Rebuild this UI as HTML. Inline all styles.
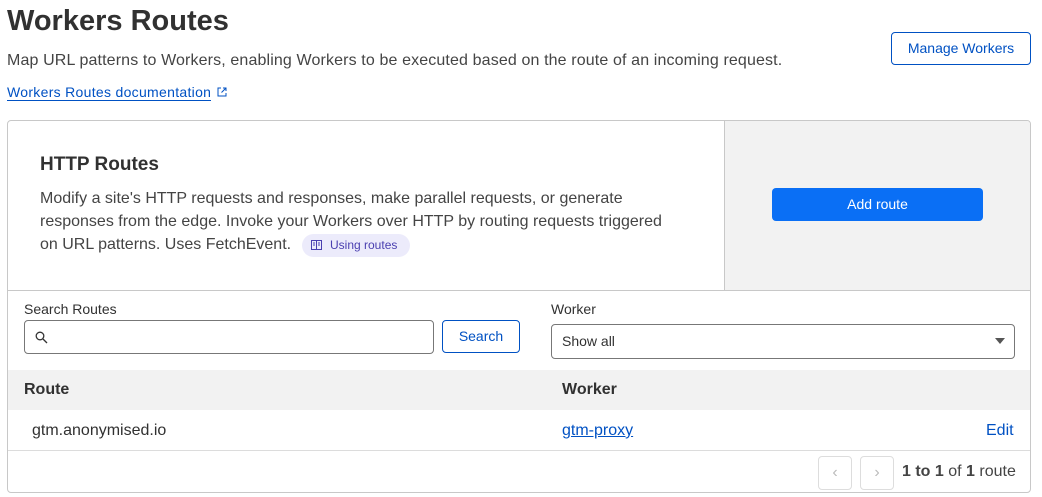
<!DOCTYPE html>
<html><head><style>
*{box-sizing:border-box;margin:0;padding:0}
body{width:1042px;height:497px;background:#fff;font-family:"Liberation Sans",sans-serif;color:#313131;position:relative;overflow:hidden}
.a{position:absolute;white-space:nowrap}
</style></head><body>
<div class="a" style="left:7px;top:5px;font-size:29px;font-weight:bold;color:#313131">Workers Routes</div>
<div class="a" style="left:7px;top:52px;font-size:16px;letter-spacing:0.13px;color:#444">Map URL patterns to Workers, enabling Workers to be executed based on the route of an incoming request.</div>
<div class="a" style="left:7px;top:84px;font-size:14px;letter-spacing:0.3px;color:#0051c3;border-bottom:1px solid #0051c3;line-height:16px">Workers Routes documentation</div>
<svg class="a" style="left:216px;top:86px" width="12" height="12" viewBox="0 0 12 12" fill="none" stroke="#0051c3" stroke-width="1"><path d="M5 2H2v8h8V7M7 2h3v3M10 2L5.5 6.5"/></svg>
<div class="a" style="left:891px;top:32px;width:140px;height:33px;border:1px solid #0051c3;border-radius:4px;color:#0051c3;font-size:14px;text-align:center;line-height:31px">Manage Workers</div>
<div class="a" style="left:7px;top:120px;width:1024px;height:373px;border:1px solid #c8c8c8;border-radius:4px;overflow:hidden">
 <div class="a" style="left:716px;top:0;width:308px;height:170px;background:#f2f2f2;border-left:1px solid #c8c8c8"></div>
 <div class="a" style="left:0;top:169px;width:1024px;height:1px;background:#c8c8c8"></div>
 <div class="a" style="left:32px;top:33px;font-size:19px;font-weight:bold">HTTP Routes</div>
 <div class="a" style="left:32px;top:66px;font-size:16px;line-height:23px;color:#444">Modify a site's HTTP requests and responses, make parallel requests, or generate<br>responses from the edge. Invoke your Workers over HTTP by routing requests triggered<br>on URL patterns. Uses FetchEvent.</div>
 <div class="a" style="left:294px;top:113px;width:108px;height:23px;background:#ecebfb;border-radius:12px;color:#4a3fb0;font-size:12px;line-height:23px;padding-left:28px">Using routes</div>
 <svg class="a" style="left:303px;top:119px" width="11" height="10" viewBox="0 0 11 10" fill="none" stroke="#4a3fb0"><rect x="0.5" y="0.5" width="10" height="9"/><path d="M5.5 1v8M2 3h2M2 5h2M7 3h2M7 5h2"/></svg>
 <div class="a" style="left:764px;top:67px;width:211px;height:33px;background:#0a6ff5;border-radius:4px;color:#fff;font-size:14px;text-align:center;line-height:33px">Add route</div>
 <div class="a" style="left:16px;top:180px;font-size:14px">Search Routes</div>
 <div class="a" style="left:16px;top:199px;width:410px;height:34px;border:1px solid #777;border-radius:4px"></div>
 <svg class="a" style="left:27px;top:210px" width="13" height="13" viewBox="0 0 13 13" fill="none" stroke="#333" stroke-width="1.3"><circle cx="5" cy="5" r="3.8"/><path d="M8 8l4 4"/></svg>
 <div class="a" style="left:434px;top:199px;width:78px;height:33px;border:1px solid #0051c3;border-radius:4px;color:#0051c3;font-size:14px;text-align:center;line-height:31px">Search</div>
 <div class="a" style="left:543px;top:180px;font-size:14px">Worker</div>
 <div class="a" style="left:543px;top:203px;width:464px;height:35px;border:1px solid #777;border-radius:4px;font-size:14px;line-height:33px;padding-left:10px">Show all</div>
 <div class="a" style="left:987px;top:217px;width:0;height:0;border-left:5px solid transparent;border-right:5px solid transparent;border-top:6px solid #555"></div>
 <div class="a" style="left:0;top:249px;width:1024px;height:40px;background:#f2f2f2"></div>
 <div class="a" style="left:16px;top:260px;font-size:16px;font-weight:bold">Route</div>
 <div class="a" style="left:554px;top:260px;font-size:16px;font-weight:bold">Worker</div>
 <div class="a" style="left:24px;top:301px;font-size:16px">gtm.anonymised.io</div>
 <div class="a" style="left:554px;top:301px;font-size:16px;color:#0051c3;text-decoration:underline">gtm-proxy</div>
 <div class="a" style="left:978px;top:301px;font-size:16px;color:#0051c3">Edit</div>
 <div class="a" style="left:0;top:329px;width:1024px;height:1px;background:#dcdcdc"></div>
 <div class="a" style="left:810px;top:335px;width:34px;height:34px;border:1px solid #ddd;border-radius:4px;color:#bbb;text-align:center;line-height:32px;font-size:16px">‹</div>
 <div class="a" style="left:852px;top:335px;width:34px;height:34px;border:1px solid #ddd;border-radius:4px;color:#bbb;text-align:center;line-height:32px;font-size:16px">›</div>
 <div class="a" style="left:894px;top:342px;font-size:16px;color:#444"><b>1 to 1</b> of <b>1</b> route</div>
</div>
</body></html>
